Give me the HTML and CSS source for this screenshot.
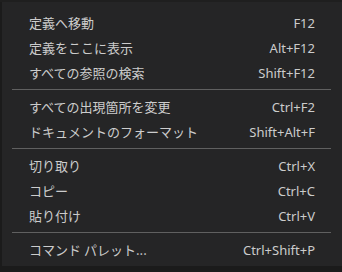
FILE: index.html
```html
<!DOCTYPE html>
<html lang="ja">
<head>
<meta charset="utf-8">
<link rel="stylesheet" href="styles.css">
</head>
<body>
<div class="menu">
  <div class="item"><span class="label">定義へ移動</span><span class="key">F12</span></div>
  <div class="item"><span class="label">定義をここに表示</span><span class="key">Alt+F12</span></div>
  <div class="item"><span class="label">すべての参照の検索</span><span class="key">Shift+F12</span></div>
  <div class="sep"></div>
  <div class="item"><span class="label">すべての出現箇所を変更</span><span class="key">Ctrl+F2</span></div>
  <div class="item"><span class="label">ドキュメントのフォーマット</span><span class="key">Shift+Alt+F</span></div>
  <div class="sep"></div>
  <div class="item"><span class="label">切り取り</span><span class="key">Ctrl+X</span></div>
  <div class="item"><span class="label">コピー</span><span class="key">Ctrl+C</span></div>
  <div class="item"><span class="label">貼り付け</span><span class="key">Ctrl+V</span></div>
  <div class="sep"></div>
  <div class="item"><span class="label">コマンド パレット...</span><span class="key">Ctrl+Shift+P</span></div>
</div>
</body>
</html>
```
FILE: styles.css
```css
html, body {
  margin: 0;
  padding: 0;
}
body {
  background: #1b1b1b;
  width: 342px;
  height: 272px;
  overflow: hidden;
  border-top: 2px solid #1f1f1f;
  box-sizing: border-box;
  padding-left: 2px;
}
.menu {
  background: #252526;
  padding: 8px 0 4px 0;
  color: #cccccc;
  font-family: "Noto Sans", "Noto Sans CJK JP", sans-serif;
  font-size: 13px;
}
.item {
  display: flex;
  justify-content: space-between;
  align-items: center;
  height: 25px;
  padding: 0 27px 0 27px;
}
.label {
  font-family: "Noto Sans CJK JP", sans-serif;
  font-size: 13px;
}
.key {
  font-family: "Noto Sans", "Noto Sans CJK JP", sans-serif;
  font-size: 13px;
}
.sep {
  height: 1px;
  background: #606060;
  margin: 4px 11px 4px 10px;
}
```
